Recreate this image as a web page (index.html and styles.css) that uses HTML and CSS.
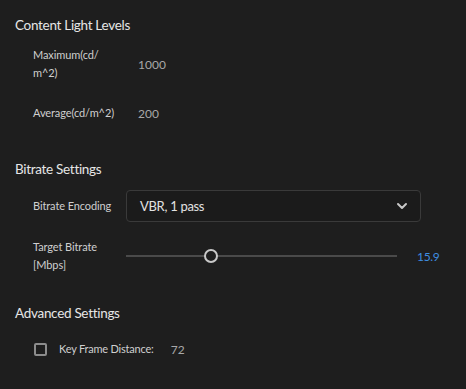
FILE: index.html
```html
<!DOCTYPE html>
<html lang="en">
<head>
    <meta charset="UTF-8">
    <meta name="viewport" content="width=device-width, initial-scale=1.0">
    <title>Export Settings</title>
    <link rel="stylesheet" href="styles.css">
</head>
<body>

    <div class="section">
        <h2 class="section-title">Content Light Levels</h2>
        <div class="row first">
            <label class="label">Maximum(cd/<br>m^2)</label>
            <span class="value">1000</span>
        </div>
        <div class="row gap-lg">
            <label class="label">Average(cd/m^2)</label>
            <span class="value">200</span>
        </div>
    </div>

    <div class="section s2">
        <h2 class="section-title">Bitrate Settings</h2>
        <div class="row first">
            <label class="label">Bitrate Encoding</label>
            <div class="select">
                <span>VBR, 1 pass</span>
                <svg class="chevron" width="12" height="8" viewBox="0 0 12 8">
                    <path d="M2 2 L6 6 L10 2" fill="none" stroke="#c8c8c8" stroke-width="2" stroke-linecap="round" stroke-linejoin="round"/>
                </svg>
            </div>
        </div>
        <div class="row slider-row">
            <label class="label">Target Bitrate<br>[Mbps]</label>
            <div class="slider">
                <div class="track"></div>
                <div class="thumb" style="left: 31%"></div>
            </div>
            <span class="slider-value">15.9</span>
        </div>
    </div>

    <div class="section s3">
        <h2 class="section-title">Advanced Settings</h2>
        <div class="row check-row">
            <span class="checkbox"></span>
            <label class="check-label">Key Frame Distance:</label>
            <span class="value kf">72</span>
        </div>
    </div>

</body>
</html>
```

FILE: styles.css
```css
body {
    margin: 0;
    background-color: #1e1e1e;
    font-family: Lato, "Open Sans", sans-serif;
    color: #d4d4d4;
    padding-top: 15px;
}
.section {
    padding-left: 15px;
}
.s2 {
    margin-top: 37px;
}
.s3 {
    margin-top: 29px;
}
.section-title {
    margin: 0;
    font-size: 13.5px;
    letter-spacing: -0.3px;
    font-weight: normal;
    line-height: 20px;
    color: #e6e6e6;
}
.row {
    display: flex;
    align-items: center;
    padding-left: 18px;
    margin-top: 22px;
}
.row.first {
    margin-top: 11px;
}
.label {
    width: 93px;
    flex-shrink: 0;
    font-size: 11px;
    letter-spacing: -0.1px;
    line-height: 18px;
    color: #cfcfcf;
}
.value {
    font-size: 12px;
    color: #a8a8a8;
    padding-left: 12px;
}
.select {
    width: 295px;
    height: 32px;
    box-sizing: border-box;
    border: 1px solid #3a3a3a;
    border-radius: 4px;
    background-color: #1b1b1b;
    display: flex;
    align-items: center;
    justify-content: space-between;
    padding: 0 12px 0 13px;
    font-size: 13px;
    letter-spacing: -0.3px;
    color: #e2e2e2;
}
.slider-row {
    margin-top: 16px;
}
.slider {
    position: relative;
    width: 271px;
    height: 18px;
}
.track {
    position: absolute;
    left: 0;
    right: 0;
    top: 8px;
    height: 2px;
    background-color: #4a4a4a;
}
.thumb {
    position: absolute;
    top: 2px;
    width: 14px;
    height: 14px;
    margin-left: -6px;
    box-sizing: border-box;
    border: 2px solid #c8c8c8;
    border-radius: 50%;
    background-color: #1e1e1e;
}
.slider-value {
    margin-left: 20px;
    font-size: 12px;
    letter-spacing: -0.3px;
    color: #3f8de0;
}
.check-row {
    margin-top: 17px;
    padding-left: 19px;
}
.checkbox {
    width: 13px;
    height: 13px;
    box-sizing: border-box;
    border: 2px solid #8c8c8c;
    border-radius: 2px;
}
.check-label {
    margin-left: 12px;
    font-size: 11px;
    letter-spacing: -0.2px;
    line-height: 18px;
    color: #cfcfcf;
}
.kf {
    padding-left: 17px;
}
```
